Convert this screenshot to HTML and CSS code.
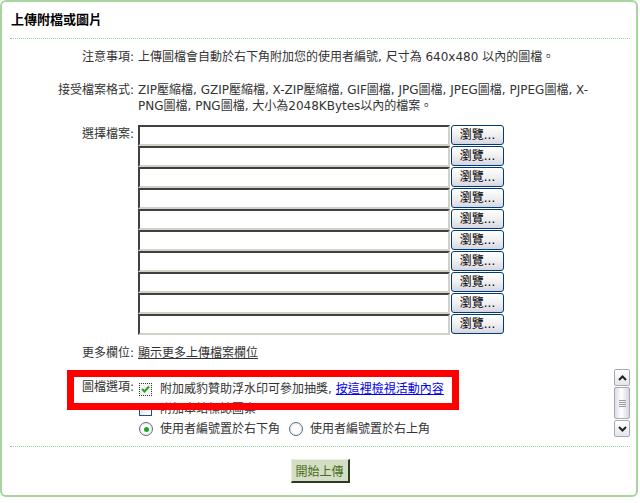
FILE: index.html
```html
<!DOCTYPE html>
<html lang="zh-Hant">
<head>
    <meta charset="UTF-8">
    <title>上傳附檔或圖片</title>
    <link rel="stylesheet" href="styles.css">
</head>
<body>
    <div class="panel">
        <h3 class="panel-title">上傳附檔或圖片</h3>

        <div class="upload-form">
            <div class="row row-note">
                <div class="label">注意事項:</div>
                <div class="field">上傳圖檔會自動於右下角附加您的使用者編號, 尺寸為 640x480 以內的圖檔。</div>
            </div>

            <div class="row row-types">
                <div class="label">接受檔案格式:</div>
                <div class="field">ZIP壓縮檔, GZIP壓縮檔, X-ZIP壓縮檔, GIF圖檔, JPG圖檔, JPEG圖檔, PJPEG圖檔, X-PNG圖檔, PNG圖檔, 大小為2048KBytes以內的檔案。</div>
            </div>

            <div class="row row-files">
                <div class="label">選擇檔案:</div>
                <div class="field files">
                    <div class="file"><span class="file-box"></span><span class="browse">瀏覽...</span></div>
                    <div class="file"><span class="file-box"></span><span class="browse">瀏覽...</span></div>
                    <div class="file"><span class="file-box"></span><span class="browse">瀏覽...</span></div>
                    <div class="file"><span class="file-box"></span><span class="browse">瀏覽...</span></div>
                    <div class="file"><span class="file-box"></span><span class="browse">瀏覽...</span></div>
                    <div class="file"><span class="file-box"></span><span class="browse">瀏覽...</span></div>
                    <div class="file"><span class="file-box"></span><span class="browse">瀏覽...</span></div>
                    <div class="file"><span class="file-box"></span><span class="browse">瀏覽...</span></div>
                    <div class="file"><span class="file-box"></span><span class="browse">瀏覽...</span></div>
                    <div class="file"><span class="file-box"></span><span class="browse">瀏覽...</span></div>
                </div>
            </div>

            <div class="row row-more">
                <div class="label">更多欄位:</div>
                <div class="field"><a href="#" class="more-link">顯示更多上傳檔案欄位</a></div>
            </div>

            <div class="row row-options">
                <div class="label">圖檔選項:</div>
                <div class="field options">
                    <div class="opt"><span class="check checked"><svg width="11" height="11" viewBox="0 0 11 11"><path d="M2 5 L4.5 7.5 L9 2.5" fill="none" stroke="#21a121" stroke-width="2"/></svg></span>附加威豹贊助浮水印可參加抽獎, <a href="#" class="event-link">按這裡檢視活動內容</a></div>
                    <div class="opt"><span class="check"></span>附加本站標誌圖案</div>
                    <div class="opt"><span class="radio on"></span>使用者編號置於右下角<span class="radio second"></span>使用者編號置於右上角</div>
                </div>
                <div class="scrollbar">
                    <div class="sb-btn"><svg width="9" height="6" viewBox="0 0 9 6"><path d="M1 5 L4.5 1.5 L8 5" fill="none" stroke="#222" stroke-width="2"/></svg></div>
                    <div class="sb-thumb"><span></span><span></span><span></span><span></span></div>
                    <div class="sb-btn"><svg width="9" height="6" viewBox="0 0 9 6"><path d="M1 1 L4.5 4.5 L8 1" fill="none" stroke="#222" stroke-width="2"/></svg></div>
                </div>
            </div>
        </div>

        <div class="actions">
            <button type="button" class="submit">開始上傳</button>
        </div>

        <div class="highlight"></div>
    </div>
</body>
</html>
```

FILE: styles.css
```css
body {
    margin: 0;
    font-family: 'DejaVu Sans', 'Noto Sans CJK TC', sans-serif;
    font-size: 12px;
    line-height: 16px;
    color: #333;
    background-color: #fff;
}

.panel {
    position: relative;
    box-sizing: border-box;
    width: 638px;
    height: 497px;
    border: 2px solid #a6d59e;
    border-radius: 6px;
    padding: 0 6px 0 8px;
}

.panel-title {
    margin: 0;
    padding: 10px 0 10px 1px;
    font-size: 13px;
    font-weight: bold;
    line-height: 16px;
    color: #000;
    border-bottom: 1px dotted #99cc99;
}

.upload-form {
    padding-bottom: 9px;
    border-bottom: 1px dotted #99cc99;
}

.row {
    display: grid;
    grid-template-columns: 128px 1fr;
}

.label {
    text-align: right;
    padding-right: 4px;
}

.row-note {
    margin-top: 10px;
}

.row-types {
    margin-top: 17px;
}

.row-types .field {
    padding-right: 24px;
}

.row-files {
    margin-top: 11px;
}

.row-files .label {
    padding-top: 1px;
}

.file {
    display: flex;
    align-items: flex-start;
    height: 21px;
}

.file-box {
    box-sizing: border-box;
    width: 312px;
    height: 21px;
    border-style: solid;
    border-width: 2px;
    border-color: #404040 #d4d0c8 #d4d0c8 #404040;
    background-color: #fff;
}

.browse {
    box-sizing: border-box;
    width: 53px;
    height: 20px;
    margin-left: 1px;
    border: 1px solid #003c74;
    border-radius: 3px;
    background: linear-gradient(#ffffff, #f0f0f0 50%, #d6d6e2);
    color: #000;
    text-align: center;
    line-height: 18px;
}

.row-more {
    margin-top: 10px;
}

.more-link {
    color: #333;
    text-decoration: underline;
}

.row-options {
    margin-top: 8px;
    height: 68px;
    grid-template-columns: 128px 1fr 16px;
    overflow: hidden;
}

.row-options .label {
    padding-top: 10px;
}

.options {
    padding-top: 10px;
}

.opt {
    display: flex;
    align-items: center;
    height: 20px;
    white-space: nowrap;
}

.event-link {
    margin-left: 4px;
    color: #0000ee;
    text-decoration: underline;
}

.check {
    box-sizing: border-box;
    width: 13px;
    height: 13px;
    margin: 0 8px 0 1px;
    border: 1px solid #1c5180;
    background: linear-gradient(135deg, #dcdcd7, #ffffff);
}

.check.checked {
    display: flex;
    align-items: center;
    justify-content: center;
    border: 1px dotted #333;
    background: #f4f4f0;
}

.radio {
    box-sizing: border-box;
    width: 14px;
    height: 14px;
    margin: 0 7px 0 1px;
    border: 1px solid #5a6e88;
    border-radius: 50%;
    background: radial-gradient(circle, #ffffff 40%, #dcdcd7);
    display: flex;
    align-items: center;
    justify-content: center;
}

.radio.on::after {
    content: '';
    width: 5px;
    height: 5px;
    border-radius: 50%;
    background-color: #21a121;
}

.radio.second {
    margin-left: 9px;
}

.scrollbar {
    display: flex;
    flex-direction: column;
    height: 68px;
}

.sb-btn {
    box-sizing: border-box;
    height: 17px;
    border: 1px solid #a8a8b4;
    border-radius: 2px;
    background: linear-gradient(#ffffff, #e4e4ec);
    display: flex;
    align-items: center;
    justify-content: center;
}

.sb-thumb {
    box-sizing: border-box;
    flex: 1;
    margin: 1px 0;
    border: 1px solid #a8a8b4;
    border-radius: 2px;
    background: linear-gradient(90deg, #dcdce4, #ffffff 45%, #d4d4de);
    display: flex;
    flex-direction: column;
    align-items: center;
    justify-content: center;
    gap: 1px;
}

.sb-thumb span {
    width: 7px;
    height: 1px;
    background-color: #9a9aa6;
}

.actions {
    display: flex;
    justify-content: center;
    padding-top: 12px;
}

.submit {
    box-sizing: border-box;
    width: 59px;
    height: 24px;
    padding: 0;
    border-style: solid;
    border-width: 1px 2px 2px 1px;
    border-color: #e6eddc #2f3a25 #2f3a25 #e6eddc;
    background-color: #d3dec4;
    color: #4b6b22;
    font-family: 'DejaVu Sans', 'Noto Sans CJK TC', sans-serif;
    font-size: 12px;
}

.highlight {
    position: absolute;
    left: 65px;
    top: 368px;
    box-sizing: border-box;
    width: 392px;
    height: 40px;
    border: 7px solid #ff0000;
}
```
